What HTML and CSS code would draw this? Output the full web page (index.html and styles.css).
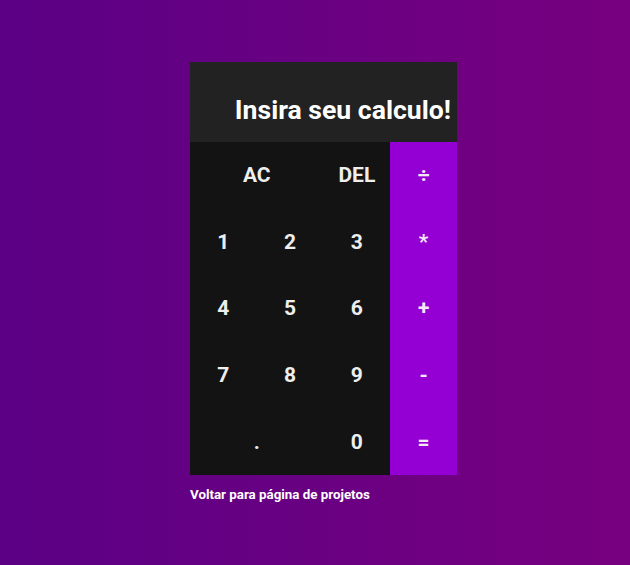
FILE: index.html
```html
<!DOCTYPE html>
<html lang="pt-BR">
<head>
<meta charset="utf-8">
<title>Calculadora</title>
<link rel="stylesheet" href="styles.css">
</head>
<body>
<main class="page">
  <div class="calculator">
    <div class="display">Insira seu calculo!</div>
    <div class="keys">
      <button class="key span2">AC</button>
      <button class="key">DEL</button>
      <button class="key op">÷</button>
      <button class="key">1</button>
      <button class="key">2</button>
      <button class="key">3</button>
      <button class="key op">*</button>
      <button class="key">4</button>
      <button class="key">5</button>
      <button class="key">6</button>
      <button class="key op">+</button>
      <button class="key">7</button>
      <button class="key">8</button>
      <button class="key">9</button>
      <button class="key op">-</button>
      <button class="key span2">.</button>
      <button class="key">0</button>
      <button class="key op">=</button>
    </div>
    <a class="back" href="#">Voltar para página de projetos</a>
  </div>
</main>
</body>
</html>
```

FILE: styles.css
```css
* { box-sizing: border-box; }
html, body { margin: 0; height: 100%; }
body {
  background: linear-gradient(to right, #5b0085, #77007f);
  font-family: Roboto, "Noto Sans", sans-serif;
}
.page {
  display: flex;
  justify-content: center;
  padding-top: 62px;
}
.calculator {
  width: 267px;
  margin-left: 17px;
}
.display {
  height: 80px;
  background: #222222;
  color: #ffffff;
  font-weight: 700;
  font-size: 26.6px;
  text-align: right;
  padding: 32px 6px 0 0;
  line-height: 32px;
  white-space: nowrap;
}
.keys {
  display: grid;
  grid-template-columns: repeat(4, 1fr);
  grid-auto-rows: 66.6px;
  background: #131313;
}
.key {
  border: none;
  background: transparent;
  color: #eeeeee;
  font-family: Roboto, "Noto Sans", sans-serif;
  font-weight: 700;
  font-size: 21px;
  padding: 0;
  cursor: pointer;
}
.span2 { grid-column: span 2; }
.op {
  background: #9400d3;
  color: #f4e8f6;
}
.back {
  display: block;
  margin-top: 12px;
  color: #ffffff;
  font-weight: 700;
  font-size: 13.33px;
  text-decoration: none;
}
```
